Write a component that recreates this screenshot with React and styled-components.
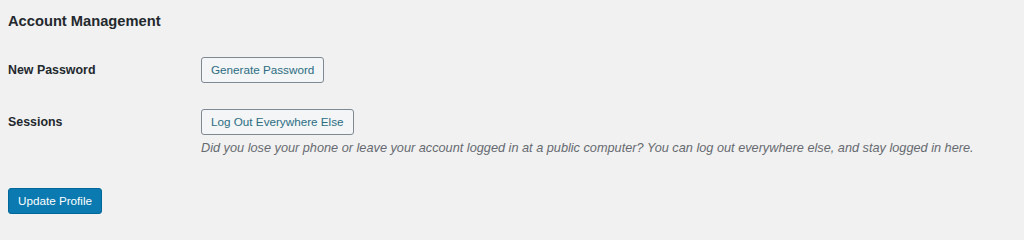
import React from "react";
import styled, { createGlobalStyle } from "styled-components";

const Global = createGlobalStyle`
  html, body { margin: 0; padding: 0; background: #f1f1f1; }
  body { font-family: "Liberation Sans", Arial, sans-serif; color: #23282d; }
`;

const Page = styled.div`
  padding: 11px 8px 20px 8px;
`;

const Heading = styled.h2`
  margin: 0;
  font-size: 14.7px;
  line-height: 20px;
  font-weight: 700;
  color: #23282d;
`;

const Form = styled.div`
  display: grid;
  grid-template-columns: 193px 1fr;
  row-gap: 26px;
  margin-top: 26px;
`;

const Label = styled.div`
  font-size: 12.4px;
  font-weight: 700;
  line-height: 26px;
  color: #23282d;
`;

const Field = styled.div`
  display: flex;
  flex-direction: column;
  align-items: flex-start;
`;

const Button = styled.button`
  box-sizing: border-box;
  height: 26px;
  padding: 0 9px;
  font-family: inherit;
  font-size: 11.7px;
  line-height: 24px;
  border-radius: 3px;
  cursor: pointer;
  border: 1px solid ${(p) => (p.$primary ? "#006799" : "#7e8993")};
  background: ${(p) => (p.$primary ? "#0a7ab0" : "#f3f5f6")};
  color: ${(p) => (p.$primary ? "#ffffff" : "#2b6d84")};
`;

const Description = styled.p`
  margin: 4px 0 0 0;
  font-size: 12.72px;
  line-height: 18px;
  font-style: italic;
  color: #666a70;
`;

const Submit = styled.div`
  margin-top: 31px;
`;

export default function App() {
  return (
    <>
      <Global />
      <Page>
        <Heading>Account Management</Heading>
        <Form>
          <Label>New Password</Label>
          <Field>
            <Button type="button">Generate Password</Button>
          </Field>
          <Label>Sessions</Label>
          <Field>
            <Button type="button">Log Out Everywhere Else</Button>
            <Description>
              Did you lose your phone or leave your account logged in at a public computer? You can log out everywhere else, and stay logged in here.
            </Description>
          </Field>
        </Form>
        <Submit>
          <Button type="button" $primary>Update Profile</Button>
        </Submit>
      </Page>
    </>
  );
}
